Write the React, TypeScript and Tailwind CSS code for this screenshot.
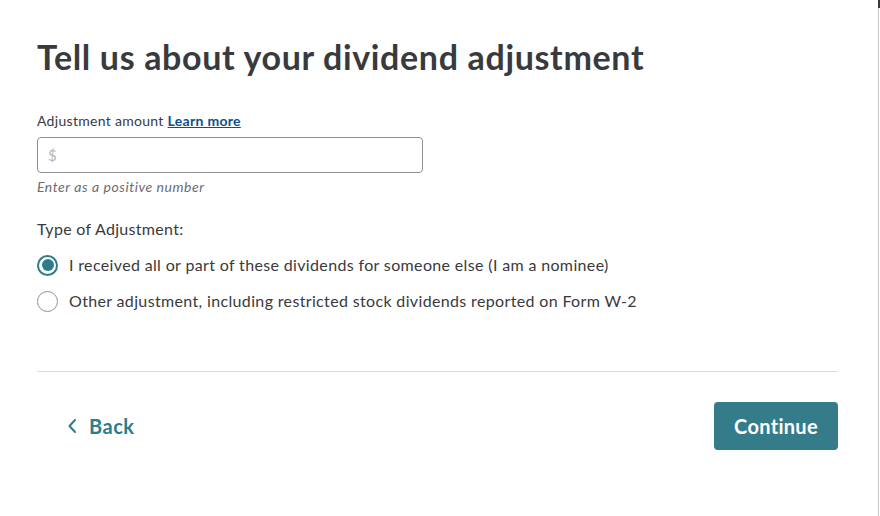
import { useState } from "react";

const options = [
  "I received all or part of these dividends for someone else (I am a nominee)",
  "Other adjustment, including restricted stock dividends reported on Form W-2",
];

export default function App() {
  const [selected, setSelected] = useState(0);

  return (
    <div className="flex h-[516px] w-[880px] bg-white font-['Lato',sans-serif] text-[#393a3d]">
      <main className="flex-1 pl-[37px] pr-[40px] pt-[35px]">
        <h1 className="text-[34px] font-bold leading-[44px] tracking-[0.65px]">
          Tell us about your dividend adjustment
        </h1>

        <div className="mt-[33px]">
          <label className="block text-[14px] leading-[18px] tracking-[0.3px]">
            Adjustment amount{" "}
            <a href="#" className="font-bold text-[#0d4f8b] underline">
              Learn more
            </a>
          </label>
          <div className="mt-[7px] flex h-[36px] w-[386px] items-center rounded-[4px] border border-[#8d9096] px-[10px]">
            <span className="text-[15px] text-[#b4b6ba]">$</span>
            <input className="ml-1 flex-1 bg-transparent text-[15px] outline-none" />
          </div>
          <p className="mt-[5px] text-[14px] italic leading-[17px] tracking-[0.55px] text-[#6b6c72]">
            Enter as a positive number
          </p>
        </div>

        <fieldset className="mt-[24px]">
          <legend className="text-[16px] leading-[20px] tracking-[0.3px]">Type of Adjustment:</legend>
          <div className="mt-[15px] flex flex-col gap-[14px]">
            {options.map((text, i) => (
              <label key={i} className="flex h-[22px] cursor-pointer items-center gap-[11px]">
                <span
                  onClick={() => setSelected(i)}
                  className={
                    selected === i
                      ? "flex h-[21px] w-[21px] items-center justify-center rounded-full border-2 border-[#2f7b89]"
                      : "flex h-[21px] w-[21px] items-center justify-center rounded-full border border-[#8d9096]"
                  }
                >
                  {selected === i && <span className="h-[12px] w-[12px] rounded-full bg-[#2f7b89]" />}
                </span>
                <span className="text-[16px] tracking-[0.35px]">{text}</span>
              </label>
            ))}
          </div>
        </fieldset>

        <hr className="mt-[59px] border-t border-[#dcdcdc]" />

        <div className="mt-[30px] flex items-center justify-between">
          <button className="ml-[30px] flex items-center gap-[12px] text-[20px] font-bold tracking-[0.5px] text-[#2b7d8b]">
            <svg width="10" height="16" viewBox="0 0 10 16" fill="none">
              <path d="M8 2L2.5 8L8 14" stroke="currentColor" strokeWidth="2" strokeLinecap="round" strokeLinejoin="round" />
            </svg>
            Back
          </button>
          <button className="h-[48px] w-[124px] rounded-[4px] bg-[#357c8a] text-[20px] font-bold tracking-[0.3px] text-white">
            Continue
          </button>
        </div>
      </main>
      <div className="flex w-[2px] flex-col">
        <div className="h-[8px] w-[2px] bg-[#3a3a3a]" />
        <div className="flex-1 border-l border-[#c8c8c8]" />
      </div>
    </div>
  );
}
